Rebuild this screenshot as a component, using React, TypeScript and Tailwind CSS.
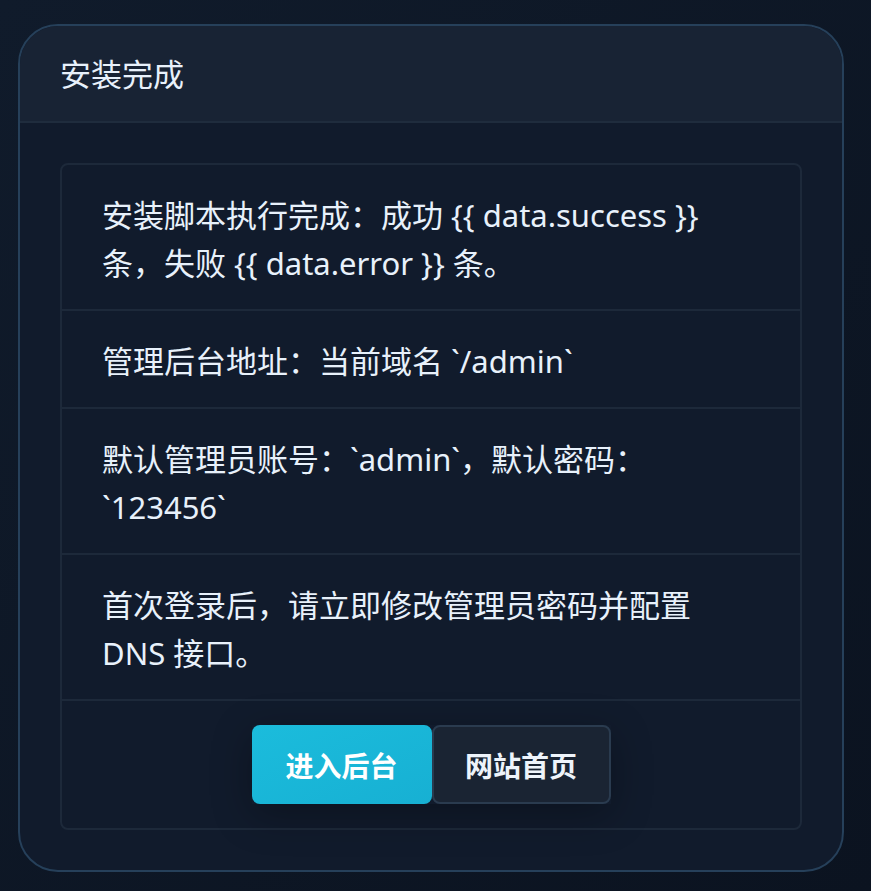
const items = [
  '安装脚本执行完成：成功 {{ data.success }} 条，失败 {{ data.error }} 条。',
  '管理后台地址：当前域名 `/admin`',
  '默认管理员账号：`admin`，默认密码：`123456`',
  '首次登录后，请立即修改管理员密码并配置 DNS 接口。',
];

export default function App() {
  return (
    <div
      className="min-h-[891px] w-full bg-gradient-to-br from-[#101b2b] to-[#0b1320] pl-[18px] pt-[24px] pb-[19px]"
      style={{ fontFamily: '"Noto Sans", "Noto Sans CJK SC", sans-serif' }}
    >
      <div className="w-[826px] overflow-hidden rounded-[40px] border-2 border-[#26405a] bg-[#111b2c] text-[#e8f1fb]">
        {/* Header */}
        <div className="border-b-2 border-[#1f2c3d] bg-[#182334] px-[40px] pb-[23px] pt-[24px]">
          <h1 className="text-[31px] leading-[48px] font-normal">安装完成</h1>
        </div>

        {/* Body */}
        <div className="p-[40px]">
          <ul className="rounded-[8px] border-2 border-[#1d293a] bg-[#111b2c]">
            {items.map((text, i) => (
              <li
                key={i}
                className="border-b-2 border-[#1d293a] px-[40px] pb-[22px] pt-[26px] text-[31px] leading-[48px]"
              >
                {text}
              </li>
            ))}
            <li className="flex justify-center py-[24px]">
              <div className="flex shadow-[0_10px_40px_rgba(0,0,0,0.3)]">
                <button className="h-[79px] w-[180px] rounded-[8px] bg-gradient-to-br from-[#1bbcdc] to-[#17b0d3] pt-[2px] text-[28px] font-bold text-white">
                  进入后台
                </button>
                <button className="h-[79px] w-[179px] rounded-[8px] border-2 border-[#2a3b4f] bg-[#1a2433] pt-[2px] text-[28px] font-bold text-[#eef4fb]">
                  网站首页
                </button>
              </div>
            </li>
          </ul>
        </div>
      </div>
    </div>
  );
}
